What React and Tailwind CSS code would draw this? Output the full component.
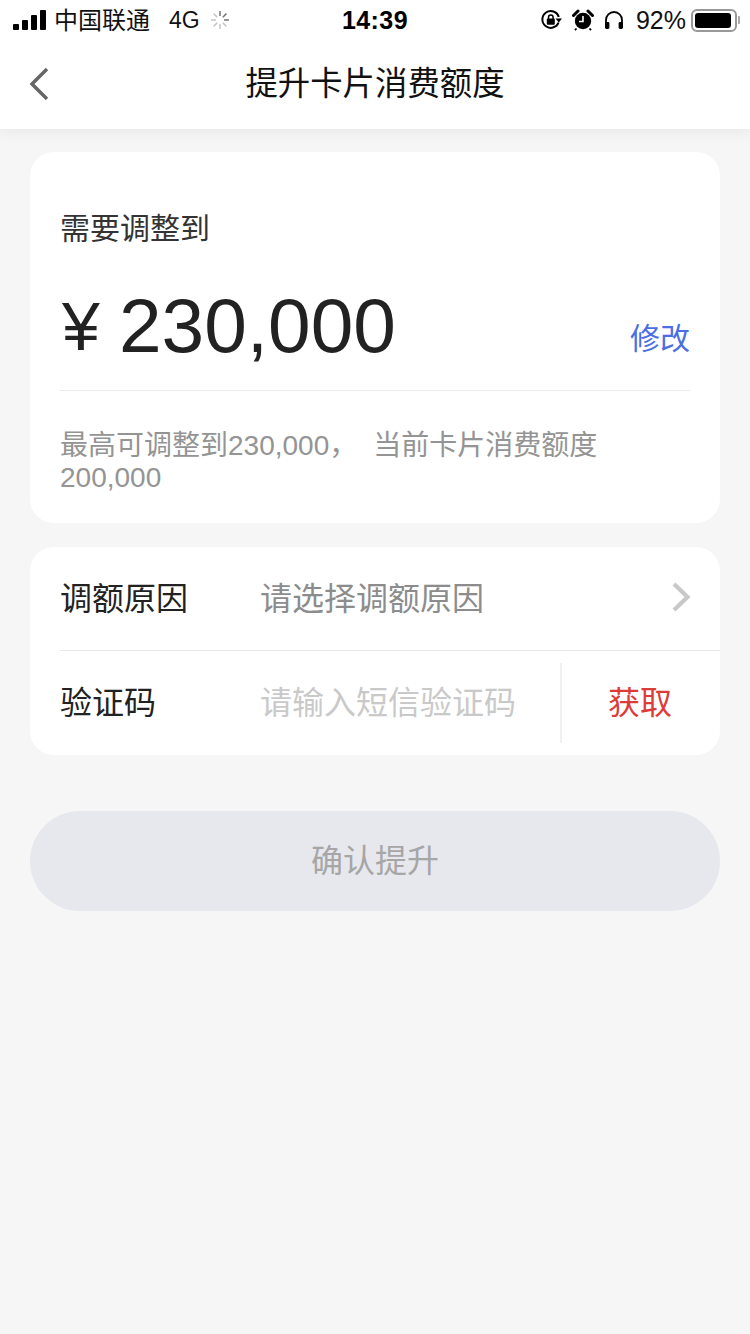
const font = { fontFamily: '"Liberation Sans","Noto Sans CJK SC",sans-serif' };

function Signal() {
  return (
    <div className="flex items-end gap-[3px] w-[33px] h-[20px]">
      <div className="w-[6px] h-[6px] rounded-[1px] bg-black" />
      <div className="w-[6px] h-[10px] rounded-[1px] bg-black" />
      <div className="w-[6px] h-[15px] rounded-[1px] bg-black" />
      <div className="w-[6px] h-[20px] rounded-[1px] bg-black" />
    </div>
  );
}

function Spinner() {
  const lines = [0, 45, 90, 135, 180, 225, 270, 315];
  return (
    <svg width="20" height="20" viewBox="0 0 20 20" className="ml-[10px]">
      {lines.map((a, i) => (
        <line key={a} x1="10" y1="1" x2="10" y2="6" stroke={i < 3 ? '#777' : '#c4c4c4'} strokeWidth="1.5" transform={`rotate(${a} 10 10)`} />
      ))}
    </svg>
  );
}

function RotationLock() {
  return (
    <svg width="22" height="22" viewBox="0 0 22 22">
      <path d="M18.6 13.5A8.4 8.4 0 1 1 18.8 8" fill="none" stroke="#000" strokeWidth="2" />
      <path d="M15.5 9.5h6.5l-3.2 4z" fill="#000" />
      <rect x="6.8" y="9.6" width="8" height="6.2" rx="1" fill="#000" />
      <path d="M8.5 10V8.2a2.3 2.3 0 0 1 4.6 0V10" fill="none" stroke="#000" strokeWidth="1.5" />
    </svg>
  );
}

function Alarm() {
  return (
    <svg width="22" height="22" viewBox="0 0 22 22">
      <circle cx="11" cy="12" r="8.2" fill="#000" />
      <path d="M1.5 6.5 6 2M16 2l4.5 4.5" stroke="#000" strokeWidth="3" strokeLinecap="round" />
      <path d="M4.5 19.5 3 21.2M17.5 19.5 19 21.2" stroke="#000" strokeWidth="1.8" />
      <path d="M11 7v5.5H7" fill="none" stroke="#fff" strokeWidth="1.6" />
    </svg>
  );
}

function Headphones() {
  return (
    <svg width="20" height="20" viewBox="0 0 20 20">
      <path d="M2 14V10a8 8 0 0 1 16 0v4" fill="none" stroke="#000" strokeWidth="1.8" />
      <rect x="1" y="12" width="4.4" height="7" rx="1.4" fill="#000" />
      <rect x="14.6" y="12" width="4.4" height="7" rx="1.4" fill="#000" />
    </svg>
  );
}

function Battery() {
  return (
    <div className="flex items-center">
      <div className="w-[46px] h-[23px] rounded-[6px] border-2 border-[#999] p-[2px]">
        <div className="w-[36px] h-full rounded-[3px] bg-black" />
      </div>
      <div className="ml-[1px] w-[2px] h-[8px] rounded-r-[1px] bg-[#aaa]" />
    </div>
  );
}

export default function App() {
  return (
    <div style={font} className="w-[750px] h-[1334px] bg-[#f6f6f6] flex flex-col overflow-hidden">
      <header className="bg-white h-[129px] shadow-[0_2px_14px_rgba(0,0,0,0.07)] relative flex flex-col">
        <div className="h-[40px] pl-[13px] pr-[13px] flex items-center justify-between text-black relative">
          <div className="flex items-center">
            <Signal />
            <span className="text-[24px] leading-none ml-[8px] text-[#111] pt-[1px]">中国联通</span>
            <span className="text-[23px] leading-none ml-[19px] text-[#111] pt-[1px]">4G</span>
            <Spinner />
          </div>
          <span className="absolute left-0 right-0 text-center text-[25px] font-bold leading-none tracking-[0.4px] pt-[1px]">14:39</span>
          <div className="flex items-center">
            <RotationLock />
            <div className="ml-[10px]"><Alarm /></div>
            <div className="ml-[10px]"><Headphones /></div>
            <span className="text-[25px] leading-none ml-[12px] text-[#111] pt-[1px]">92%</span>
            <div className="ml-[5px] mr-[-3px]"><Battery /></div>
          </div>
        </div>
        <div className="flex-1 flex items-center justify-center relative pb-[1px]">
          <svg width="20" height="34" viewBox="0 0 20 34" className="absolute left-[29px] top-[27px]">
            <path d="M18 2 3 17l15 15" fill="none" stroke="#666" strokeWidth="3.5" />
          </svg>
          <h1 className="text-[32.4px] leading-none font-normal text-[#111]">提升卡片消费额度</h1>
        </div>
      </header>

      <main className="px-[30px] pt-[23px] flex flex-col">
        <section className="bg-white rounded-[24px] h-[371px] px-[30px] pt-[60px]">
          <div className="text-[30px] leading-[34px] text-[#333]">需要调整到</div>
          <div className="flex items-end justify-between h-[64px] mt-[48px]">
            <div className="flex items-center h-[64px] text-[#222]">
              <span className="text-[68px] leading-none w-[59px] ml-[2px] mr-[-2px]">¥</span>
              <span className="text-[76.6px] leading-none pt-[1px]">230,000</span>
            </div>
            <span className="text-[30px] leading-[34px] text-[#4a6fe3] mb-[2px]">修改</span>
          </div>
          <div className="h-px bg-[#ececec] mt-[32px]" />
          <p className="text-[28px] leading-[32px] text-[#949494] mt-[39px]">
            最高可调整到230,000，<span className="ml-[16px]">当前卡片消费额度</span><br />200,000
          </p>
        </section>

        <section className="bg-white rounded-[24px] h-[208px] mt-[24px] overflow-hidden">
          <div className="h-[104px] flex items-center border-b border-[#e8e8e8] ml-[30px] pr-[29px]">
            <span className="text-[32px] leading-none text-[#222] w-[200px]">调额原因</span>
            <span className="text-[32px] leading-none text-[#8c8c8c] flex-1">请选择调额原因</span>
            <svg width="19" height="30" viewBox="0 0 19 30" className="mt-[-4px]">
              <path d="M2 2l13.5 13L2 28" fill="none" stroke="#c8c8c8" strokeWidth="4.2" />
            </svg>
          </div>
          <div className="h-[104px] pl-[30px] flex items-center">
            <span className="text-[32px] leading-none text-[#222] w-[200px]">验证码</span>
            <span className="text-[32px] leading-none text-[#c9c9c9] w-[300px]">请输入短信验证码</span>
            <div className="w-[2px] h-[80px] bg-[#f0f0f0] mt-[-1px]" />
            <span className="text-[32px] leading-none text-[#dc3c37] ml-[46px]">获取</span>
          </div>
        </section>

        <button className="mt-[56px] h-[100px] rounded-full bg-[#e7e8ed] text-[32px] leading-none text-[#a6a6a6]">确认提升</button>
      </main>
    </div>
  );
}
